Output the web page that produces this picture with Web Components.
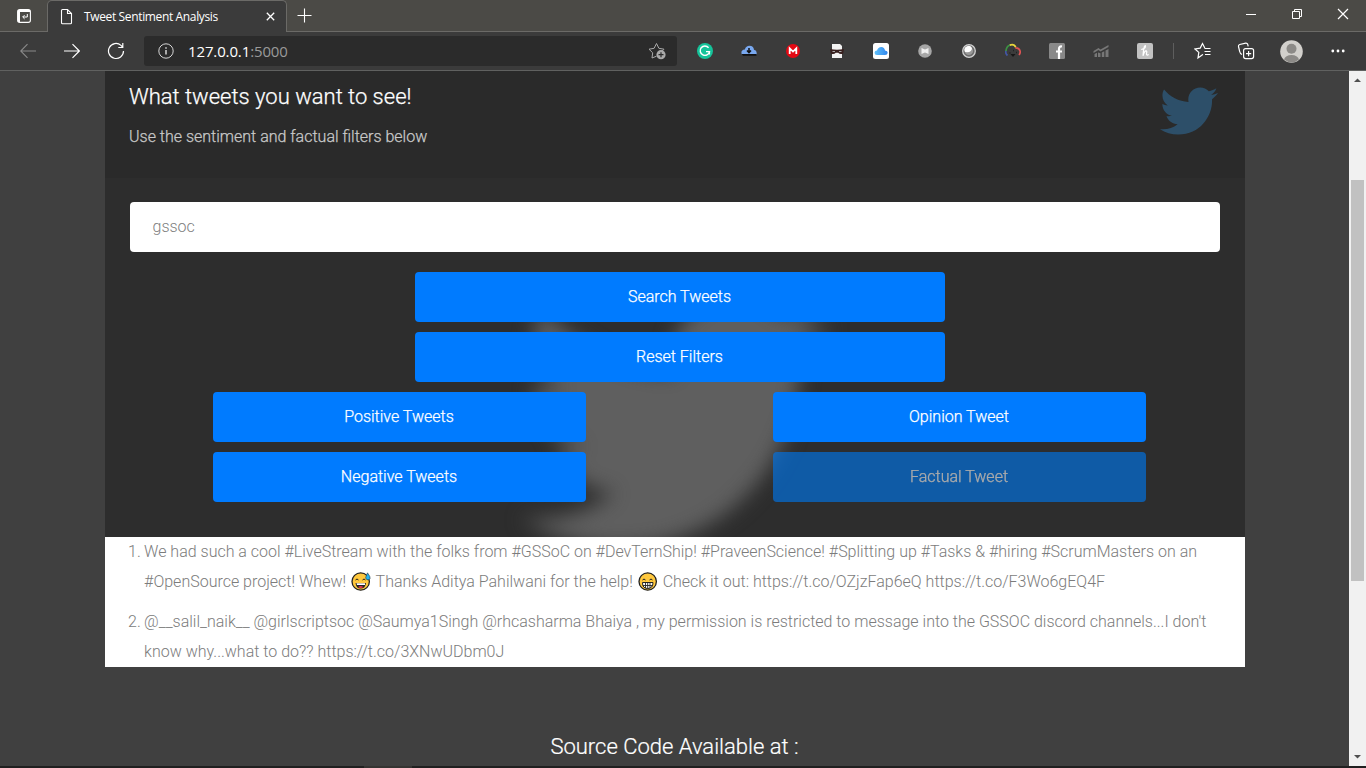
<!DOCTYPE html>
<html lang="en">
<head>
<meta charset="utf-8">
<title>Tweet Sentiment Analysis</title>
<style>
body{margin:0;background:#404040;font-family:Roboto,"Liberation Sans",sans-serif}
</style>
</head>
<body>
<app-window></app-window>
<script>
const define=(name,html)=>customElements.define(name,class extends HTMLElement{
  constructor(){super();this.attachShadow({mode:"open"}).innerHTML=html;}
});

define("tab-strip",`<style>
:host{display:flex;height:32px;background:#4b4a46;color:#fff;position:relative}
.base{position:absolute;left:0;right:0;bottom:0;height:1px;background:#6b6a67}
.pin{width:47px;display:flex;align-items:center;justify-content:center}
.tab{box-sizing:border-box;width:240px;height:32px;background:#3b3b3b;border:1px solid #6b6a67;border-bottom:0;border-radius:5px 5px 0 0;display:flex;align-items:center;position:relative;padding-left:12px;z-index:1}
.tab span{font:12px/16px "Open Sans","Noto Sans",sans-serif;letter-spacing:-.36px;margin-left:11px;flex:1;white-space:nowrap}
.tab .x{margin-right:11px}
.plus{margin-left:10px;margin-top:8px}
.win{margin-left:auto;display:flex;align-items:center;height:28px}
.win svg{width:46px;height:14px}
svg{display:block;fill:none;stroke:#fff}
</style>
<div class="base"></div>
<div class="pin"><svg width="16" height="16" viewBox="0 0 16 16"><rect x="1.600" y="1.600" width="12.800" height="12.800" rx="2.200" stroke-width="1.100"/><path d="M2 3h12M3 3v11" stroke-width="2"/><path d="M11.300 6v3H6.800M8.600 7.100 6.700 9l1.900 1.900" stroke-width="1"/></svg></div>
<div class="tab"><svg width="13" height="17" viewBox="0 0 13 17"><path d="M2.500 1.500h5l4 4v9.200q0 1-1 1h-8q-1 0-1-1v-12.200q0-1 1-1zM7.500 1.500v4h4" stroke-width="1.100"/></svg><span>Tweet Sentiment Analysis</span><svg class="x" width="9" height="9" viewBox="0 0 9 9"><path d="m.8.8 7.400 7.400m0-7.400L.8 8.200" stroke-width="1.300"/></svg></div>
<svg class="plus" width="15" height="15" viewBox="0 0 15 15"><path d="M7.500.5v14M.5 7.500h14" stroke-width="1.100"/></svg>
<div class="win"><svg viewBox="0 0 46 14"><path d="M18 7.500h10"/></svg><svg viewBox="0 0 46 14"><path d="M18.500 4.500h7v7h-7zM20.500 4.500v-2h7v7h-2"/></svg><svg viewBox="0 0 46 14"><path d="m18 2 10 10m0-10L18 12" stroke-width="1.200"/></svg></div>`);

define("address-bar",`<style>
:host{display:flex;align-items:center;flex:none;box-sizing:border-box;width:533px;height:30px;background:#2b2b2b;border-radius:3px;padding:0 11px 0 14px;font:15px/20px "Open Sans","Noto Sans",sans-serif;color:#fff}
span{margin-left:14px;letter-spacing:-.13px;flex:1}
i{font-style:normal;color:#9a9a9a}
svg{display:block}
</style>
<svg width="16" height="16" viewBox="0 0 16 16" fill="none" stroke="#d6d6d6"><circle cx="8" cy="8" r="7.200"/><path d="M8 7v4.500M8 4.200v1.500" stroke-width="1.500"/></svg>
<span>127.0.0.1<i>:5000</i></span>
<svg width="18" height="18" viewBox="0 0 18 18" fill="none" stroke="#aaa"><path d="M8.500 14.200 4 16l.7-5.200L1 7.200l5.100-.9L8.500 1.500l2.400 4.800 5.100.9-2 2"/><circle cx="13" cy="12.700" r="4.600" fill="#aaa" stroke="none"/><path d="M13 10.200v5M10.500 12.700h5" stroke="#2b2b2b" stroke-width="1.200"/></svg>`);

define("extension-row",`<style>
:host{display:flex;align-items:center;margin-left:20px;gap:28px;flex:none}
svg{display:block;width:16px;height:16px}
</style>
<svg viewBox="0 0 16 16"><circle cx="8" cy="8" r="8" fill="#15c39a"/><path d="M11.600 4.800A4.700 4.700 0 1 0 12.500 8.600H9M12.400 8.600v3" fill="none" stroke="#fff" stroke-width="1.400"/></svg>
<svg viewBox="0 0 16 16"><path d="M.8 11.500q-1.500-4.500 3-5Q5 2.800 8.500 2.800q4 0 4.500 4 3.500.8 2.500 4.700z" fill="#79a8ef"/><path d="M.5 11h15v1.700H2z" fill="#111"/><path d="M8 5v4M6 7.500 8 9.700l2-2.200" stroke="#111" stroke-width="1.500" fill="none"/></svg>
<svg viewBox="0 0 16 16"><circle cx="8" cy="8" r="7" fill="#e50914"/><path d="M4.700 11V5.300L8 8.600l3.300-3.300V11" fill="none" stroke="#fff" stroke-width="1.800"/></svg>
<svg viewBox="0 0 16 16"><path d="M3 1h8l2 2v12H3z" fill="#f3f3f3"/><path d="M1 6q7 1.500 14 0l-.8 4.500q-3 1.500-5-.8H6.800q-2 2.300-5 .8z" fill="#38201f"/><path d="M3.500 8.500H6M10 8.500h2.500" stroke="#aaa" stroke-width="1"/></svg>
<svg viewBox="0 0 16 16"><defs><linearGradient id="c" x2="1"><stop stop-color="#62c2fa"/><stop offset="1" stop-color="#2f86ee"/></linearGradient></defs><rect width="16" height="16" rx="2.500" fill="#fff"/><path d="M4 12q-2.500 0-2.500-2.300Q1.600 7.500 4 7.500 5 4 8.300 4q3.200 0 3.700 3.500 2.700.3 2.700 2.300Q14.500 12 12 12z" fill="url(#c)"/></svg>
<svg viewBox="0 0 16 16"><circle cx="8" cy="8" r="6.800" fill="#a6a6a6"/><path d="M4.500 5 8 6.500 11.500 5v6L8 9.500 4.500 11z" fill="#efefef"/></svg>
<svg viewBox="0 0 16 16"><circle cx="8" cy="8" r="6.300" fill="#6c6c6c" stroke="#d2d2d2" stroke-width="1.300"/><circle cx="7.800" cy="7.800" r="4.300" fill="#999"/><path d="M4 9a4 4 0 0 1 7-4q0 5-7 4z" fill="#fff"/></svg>
<svg viewBox="0 0 16 16" fill="none" stroke-width="1.700"><path d="M2.500 12.500Q0 10.500 1 7.500" stroke="#4356a5"/><path d="M1 8Q1.200 3.500 5 2" stroke="#3c9344"/><path d="M4.800 2.100Q9 .5 10.800 4.300" stroke="#e8d63c"/><path d="M10.300 4.800q3.700 0 4.700 3 .7 2.200-1 4.200" stroke="#df5454"/><path d="M5.500 11h5L8 14z" fill="#171717" stroke="none"/><path d="M4.500 10h1M8 7.500h1M11 9.500h1" stroke="#222"/></svg>
<svg viewBox="0 0 16 16"><rect width="16" height="16" rx="1.500" fill="#898989"/><path d="M13 3.500q-3-.5-3 2.500V16M7 8.500h6" fill="none" stroke="#fff" stroke-width="2.200"/></svg>
<svg viewBox="0 0 16 16"><g fill="#777"><path d="M.5 8 5.500 5l2 1.500L15.500 2v2L7.500 8.500l-2-1.500-5 3z"/><path d="M1.500 11 4 9.800V14H1.500zM5 9.500l2.500.8V14H5zM8.800 9.600l2.500-1.400V14H8.800zM12.500 7.500 15.500 6v8h-3z"/></g></svg>
<svg viewBox="0 0 16 16"><rect width="16" height="16" rx="2" fill="#c2c2c2"/><path d="M4.200 6.500q3.500-.5 4.300-2.800.2-1.900-1-.4Q6.500 6 6 12.800 7.500 8 9.200 7.700q1 .3.300 2.800-.3 2.500 2.200 1" fill="none" stroke="#fff" stroke-width="1.200"/></svg>`);

define("browser-toolbar",`<style>
:host{display:flex;align-items:center;box-sizing:border-box;height:39px;background:#3b3b3b;border-bottom:1px solid #606160}
:host>svg{display:block;fill:none;stroke:#fff;flex:none}
.back{margin-left:20px;opacity:.4}
.fwd{margin-left:28px}
.re{margin-left:27px}
address-bar{margin-left:19px}
.sep{width:1px;height:16px;background:#5e5e5e;margin-left:20px}
.fav{margin-left:20px}.col{margin-left:25px}.me{margin-left:25px}.dots{margin-left:27px}
</style>
<svg class="back" width="16" height="16" viewBox="0 0 16 16"><path d="M16 8H1M7.500 1.200.7 8l6.800 6.800" stroke-width="1.100"/></svg>
<svg class="fwd" width="16" height="16" viewBox="0 0 16 16"><path d="M0 8h15M8.500 1.200 15.300 8l-6.800 6.800" stroke-width="1.200"/></svg>
<svg class="re" width="18" height="18" viewBox="0 0 18 18"><path d="M16.500 9A7.500 7.500 0 1 1 14 3.400L15.500 5M15.800 1v4.500h-4.500" stroke-width="1.200"/></svg>
<address-bar></address-bar>
<extension-row></extension-row>
<div class="sep"></div>
<svg class="fav" width="18" height="18" viewBox="0 0 18 18"><path d="M9 13 8.500 12.700 4 16l.8-5.600L1 7l5.200-.9L8.500 1.500l2.300 4.600M10.500 6.500h6M10.500 9.500h6M11 12.500h5.500" stroke-width="1.200"/></svg>
<svg class="col" width="18" height="18" viewBox="0 0 18 18"><rect x="6.600" y="6.600" width="10" height="10" rx="2" stroke-width="1.200"/><path d="M11.600 9v5.200M9 11.600h5.200M5 12.500q-2-1-2.300-3L1.500 4.500Q1.200 3 2.700 2.500l6-1.400q1.500-.2 2 1.200l.5 2" stroke-width="1.200"/></svg>
<svg class="me" width="23" height="23" viewBox="0 0 23 23" style="stroke:none"><circle cx="11.500" cy="11.500" r="11.300" fill="#d2d0cc"/><circle cx="11.500" cy="8.800" r="5" fill="#8c8a87"/><path d="M4 19.500q1.500-4.500 7.500-4.500t7.500 4.500q-7 6-15 0z" fill="#8c8a87"/></svg>
<svg class="dots" width="16" height="16" viewBox="0 0 16 16" style="stroke:none;fill:#fff"><circle cx="2.800" cy="8" r="1.400"/><circle cx="8" cy="8" r="1.400"/><circle cx="13.200" cy="8" r="1.400"/></svg>`);

define("twitter-bird",`<style>:host{display:block}svg{display:block;width:100%;height:100%;overflow:visible;fill:currentColor}</style>
<svg viewBox="0 0 512 512"><path d="M459.370 151.716c.325 4.548.325 9.097.325 13.645 0 138.720-105.583 298.558-298.558 298.558-59.452 0-114.680-17.219-161.137-47.106 8.447.974 16.568 1.299 25.340 1.299 49.055 0 94.213-16.568 130.274-44.832-46.132-.975-84.792-31.188-98.112-72.772 6.498.974 12.995 1.624 19.818 1.624 9.421 0 18.843-1.300 27.614-3.573-48.081-9.747-84.143-51.980-84.143-102.985v-1.299c13.969 7.797 30.214 12.670 47.431 13.319-28.264-18.843-46.781-51.005-46.781-87.391 0-19.492 5.197-37.360 14.294-52.954 51.655 63.675 129.300 105.258 216.365 109.807-1.624-7.797-2.599-15.918-2.599-24.040 0-57.828 46.782-104.934 104.934-104.934 30.213 0 57.502 12.670 76.670 33.137 23.715-4.548 46.456-13.320 66.599-25.340-7.798 24.366-24.366 44.833-46.132 57.827 21.117-2.273 41.584-8.122 60.426-16.243-14.292 20.791-32.161 39.308-52.628 54.253z"/></svg>`);

define("card-header",`<style>
:host{display:flex;justify-content:space-between;box-sizing:border-box;height:107px;background:#2a2a2a;padding:11px 27px 0 24px}
h3{margin:0;font-size:22px;line-height:30px;font-weight:300;color:#fff;white-space:nowrap;-webkit-text-stroke:.25px}
p{margin:10px 0 0;font-size:16px;line-height:30px;font-weight:300;color:#c9c9c9;white-space:nowrap;-webkit-text-stroke:.25px}
twitter-bird{width:58px;height:58px;margin-top:.4px;color:#2d4f69}
</style>
<div><h3><slot name="title"></slot></h3><p><slot></slot></p></div><twitter-bird></twitter-bird>`);

define("tweet-button",`<style>
:host{display:flex;align-items:center;justify-content:center;height:50px;border-radius:4px;background:#007bff;color:#fff;font-size:16px;font-weight:300;-webkit-text-stroke:.25px;white-space:nowrap;box-sizing:border-box;padding:0 1px 2px 0}
:host([disabled]){opacity:.65;background:#0074e8}
:host([disabled]) span{color:#eee}
</style><span><slot></slot></span>`);

define("search-form",`<style>
:host{display:block;position:relative;box-sizing:border-box;height:359px;background:#2d2d2d;padding:24px 25px 0;overflow:hidden}
.bg{position:absolute;left:416px;top:88px;width:310px;height:310px;color:#5f5f5f;filter:blur(10px)}
.field{position:relative;box-sizing:border-box;height:50px;background:#fff;border-radius:4px;padding:0 22.500px;font-size:16px;line-height:50px;font-weight:300;color:#808080}
.row{position:relative;margin:20px -20px 0 -10px;display:grid;row-gap:10px;grid-template-columns:1fr 1fr}
.wide{grid-column:1/3;justify-self:center;width:530px}
.half{justify-self:center;width:373px;margin-right:1px}
</style>
<twitter-bird class="bg"></twitter-bird>
<div class="field">gssoc</div>
<div class="row">
<tweet-button class="wide">Search Tweets</tweet-button>
<tweet-button class="wide">Reset Filters</tweet-button>
<tweet-button class="half">Positive Tweets</tweet-button>
<tweet-button class="half">Opinion Tweet</tweet-button>
<tweet-button class="half">Negative Tweets</tweet-button>
<tweet-button class="half" disabled>Factual Tweet</tweet-button>
</div>`);

define("emoji-face",`<style>
:host{display:inline-block;width:22px;height:20px;vertical-align:-5px}
svg{display:block;margin-left:1px}.sweat{display:none}
:host([kind=sweat]) .sweat{display:inline}
:host([kind=sweat]) .teeth{display:none}
</style>
<svg width="20" height="20" viewBox="0 0 20 20"><circle cx="9.700" cy="9.500" r="8.700" fill="#ffc83d" stroke="#222" stroke-width="1.300"/><path d="M4.500 8q1.500-2 3 0M11.500 8q1.500-2 3 0" fill="none" stroke="#222"/><g class="teeth"><path d="M4.500 10.500h10.500q0 6-5.300 6t-5.200-6z" fill="#fff" stroke="#222"/><path d="M4.800 13.500h9.800M7.500 10.500v5.500M9.700 10.500v6M12 10.500v5.500" stroke="#222" stroke-width=".9"/></g><g class="sweat"><path d="M4.500 11h10.500q-.7 5.500-5.300 5.500T4.500 11z" fill="#222"/><path d="M5.500 11.300h8.500v1.600H6z" fill="#fff"/><path d="M7 15q2.700-1.800 5.400 0-2.700 2-5.400 0z" fill="#e8334a"/><path d="M16.500.8q3.200 4.200 2.600 5.700-1 2-3.200 1.200-2.200-1.500-.7-3.800z" fill="#26b3f0" stroke="#222" stroke-width=".5"/></g></svg>`);

define("tweet-item",`<style>
:host{display:flex;font-size:16px;line-height:30px;font-weight:300;color:#7c7c7c;white-space:nowrap}
b{font-weight:300;width:39.100px;box-sizing:border-box;padding-left:23px;flex:none}
</style><b><slot name="no"></slot></b><div><slot></slot></div>`);

define("tweet-list",`<style>
:host{display:flex;flex-direction:column;gap:10px;height:130px;background:#fff}
</style>
<tweet-item><span slot="no">1.</span><span>We had such a cool #LiveStream with the folks from #GSSoC on #DevTernShip! #PraveenScience! #Splitting up #Tasks &amp; #hiring #ScrumMasters on an</span><br><span>#OpenSource project! Whew! <emoji-face kind="sweat"></emoji-face> Thanks Aditya Pahilwani for the help! <emoji-face></emoji-face> Check it out: https://t.co/OZjzFap6eQ https://t.co/F3Wo6gEQ4F</span></tweet-item>
<tweet-item><span slot="no">2.</span><span>@__salil_naik__ @girlscriptsoc @Saumya1Singh @rhcasharma Bhaiya , my permission is restricted to message into the GSSOC discord channels...I don't</span><br><span>know why...what to do?? https://t.co/3XNwUDbm0J</span></tweet-item>`);

define("scroll-bar",`<style>
:host{display:flex;flex-direction:column;align-items:center;width:17px;background:#f1f1f1}
svg{display:block;height:17px;width:17px;fill:#505050}
.track{flex:1;width:13px;padding-top:92px}
.thumb{height:401px;background:#c1c1c1}
</style><svg viewBox="0 0 17 17"><path d="M5 11h7L8.500 7.500z"/></svg><div class="track"><div class="thumb"></div></div><svg viewBox="0 0 17 17"><path d="M5 6h7L8.500 9.500z"/></svg>`);

define("tweet-page",`<style>
:host{display:flex;height:695px;background:#404040}
main{flex:1;padding:0 104px 0 105px}
h4{margin:65px 1px 0 0;font-size:22px;line-height:30px;font-weight:300;color:#fff;text-align:center;-webkit-text-stroke:.2px}
</style>
<main><card-header><span slot="title">What tweets you want to see!</span>Use the sentiment and factual filters below</card-header>
<search-form></search-form><tweet-list></tweet-list><h4>Source Code Available at :</h4></main><scroll-bar></scroll-bar>`);

define("app-window",`<style>
:host{display:flex;flex-direction:column;width:1366px;height:768px;overflow:hidden}
footer{height:2px;background:#202020;padding-left:364px}
footer div{width:48px;height:2px;background:#353432}
</style><tab-strip></tab-strip><browser-toolbar></browser-toolbar><tweet-page></tweet-page><footer><div></div></footer>`);
</script>
</body>
</html>
